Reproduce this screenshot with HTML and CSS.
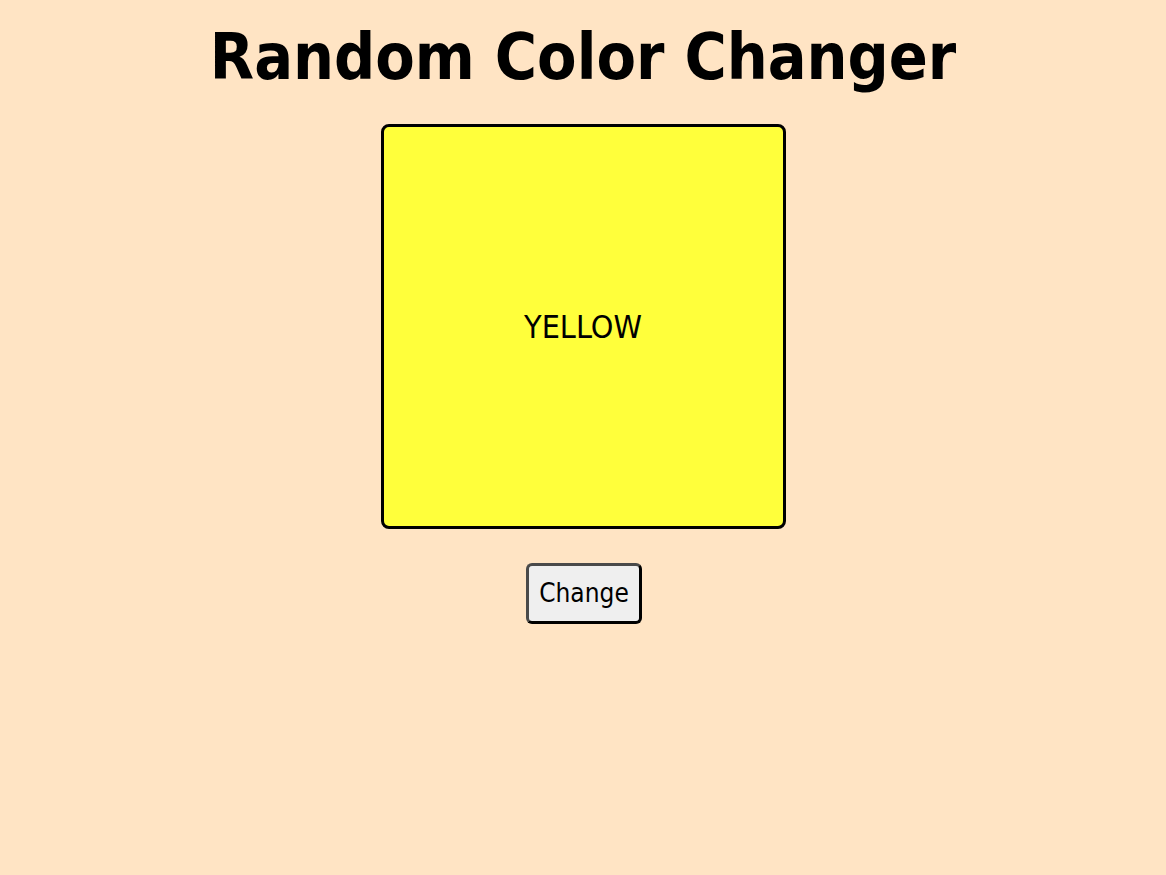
FILE: index.html
```html
<!DOCTYPE html>
<html lang="en">
<head>
<meta charset="utf-8">
<title>Random Color Changer</title>
<link rel="stylesheet" href="styles.css">
</head>
<body>
<main class="app">
  <h1 class="title">Random Color Changer</h1>
  <div class="swatch">
    <span class="swatch-label">YELLOW</span>
  </div>
  <button class="change-btn" type="button">Change</button>
</main>
</body>
</html>
```

FILE: styles.css
```css
html, body {
  margin: 0;
  padding: 0;
}

body {
  background: #ffe4c4;
  font-family: "DejaVu Sans Condensed", "DejaVu Sans", sans-serif;
  color: #000;
}

.app {
  display: flex;
  flex-direction: column;
  align-items: center;
  padding-top: 18px;
}

.title {
  margin: 0;
  font-size: 64px;
  font-weight: bold;
  line-height: 78px;
  letter-spacing: 0;
}

.swatch {
  box-sizing: border-box;
  margin-top: 28px;
  width: 405px;
  height: 405px;
  background: #ffff3b;
  border: 3px solid #000;
  border-radius: 8px;
  display: flex;
  align-items: center;
  justify-content: center;
}

.swatch-label {
  font-size: 32px;
}

.change-btn {
  margin-top: 34px;
  margin-left: 2px;
  font-family: inherit;
  font-size: 26px;
  color: #000;
  background: #efefef;
  padding: 12px 10px 13px;
  border: 3px solid;
  border-color: #4a4a4a #000 #000 #4a4a4a;
  border-radius: 6px;
}
```
